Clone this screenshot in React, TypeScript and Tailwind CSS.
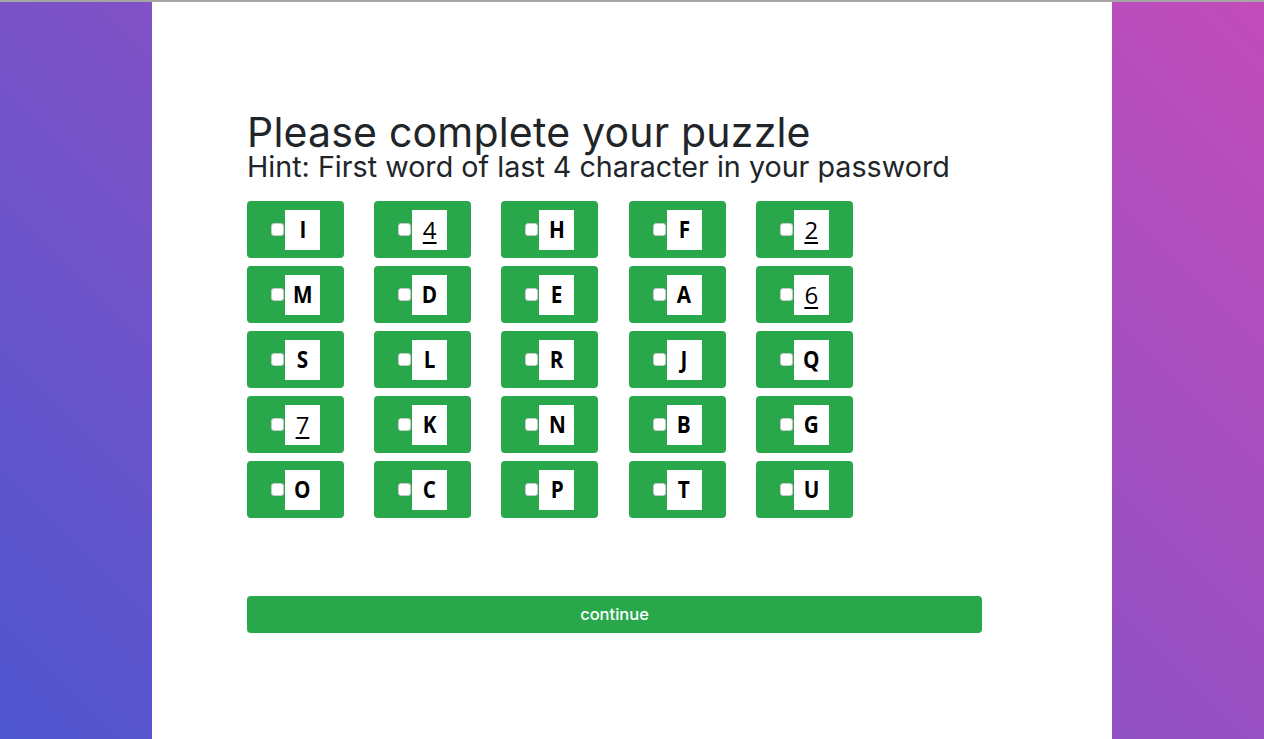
import React from "react";

const rows: string[][] = [
  ["I", "4", "H", "F", "2"],
  ["M", "D", "E", "A", "6"],
  ["S", "L", "R", "J", "Q"],
  ["7", "K", "N", "B", "G"],
  ["O", "C", "P", "T", "U"],
];

function Tile({ ch }: { ch: string }) {
  const isNum = /[0-9]/.test(ch);
  return (
    <div className="w-[97px] h-[57px] bg-[#28a84a] rounded-[4px] flex items-center justify-center">
      <span className="w-[13px] h-[13px] bg-white border border-[#c8c8c8] rounded-[3px] mr-[1px]" />
      <span className="w-[35px] h-[40px] bg-white flex items-center justify-center">
        {isNum ? (
          <span className="text-[24px] leading-none text-black underline underline-offset-[3px] decoration-[2px] font-['Open_Sans',sans-serif]">
            {ch}
          </span>
        ) : (
          <span className="text-[23px] leading-none font-bold text-black font-['Open_Sans',sans-serif] scale-x-90">
            {ch}
          </span>
        )}
      </span>
    </div>
  );
}

export default function App() {
  return (
    <div className="w-[1264px] h-[739px] flex flex-col overflow-hidden bg-[linear-gradient(45deg,#4e56cf,#c34cba)]">
      <div className="h-[2px] bg-[#a6a6a6] shrink-0" />
      <div className="flex-1 flex justify-center">
        <div className="w-[960px] h-full bg-white pl-[95px] pt-[108px]">
          <h2 className="text-[41px] leading-[44px] text-[#212529] font-['Inter',sans-serif] tracking-[0.2px]">
            Please complete your puzzle
          </h2>
          <h4 className="text-[28.7px] leading-[26px] text-[#212529] font-['Inter',sans-serif] tracking-[0px]">
            Hint: First word of last 4 character in your password
          </h4>
          <div className="mt-[21px] flex flex-col gap-[8px]">
            {rows.map((r, i) => (
              <div key={i} className="flex gap-[30.2px]">
                {r.map((c) => (
                  <Tile key={c} ch={c} />
                ))}
              </div>
            ))}
          </div>
          <button className="mt-[78px] w-[735px] h-[37px] bg-[#28a84a] rounded-[4px] text-white text-[16.5px] font-medium font-['Inter',sans-serif] flex items-center justify-center">
            continue
          </button>
        </div>
      </div>
    </div>
  );
}
